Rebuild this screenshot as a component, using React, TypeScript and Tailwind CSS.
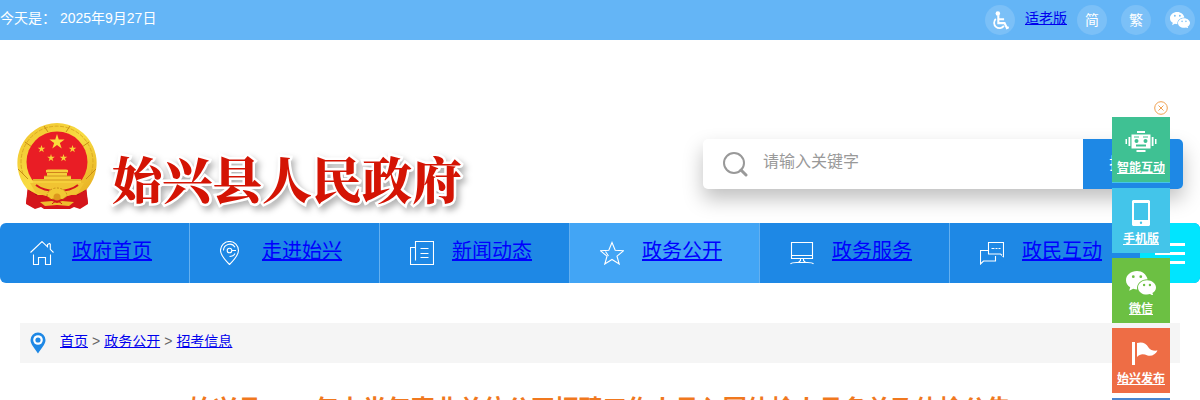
import type { ReactNode } from "react";

const sans = "font-['Liberation_Sans','Noto_Sans_CJK_SC',sans-serif]";

function Wechat({ className }: { className: string }) {
  return (
    <svg viewBox="0 0 30 24" className={className} fill="currentColor" aria-hidden="true">
      <path
        fillRule="evenodd"
        d="M11 0C4.900 0 0 4 0 9.200c0 3 1.600 5.400 4.200 7.100L3.200 19.800l4-2c1.200.3 2.500.6 3.900.6-.9-5.500 4-10.100 10.500-10.200C20.500 3.400 16.200 0 11 0ZM7.300 4.300a1.400 1.400 0 1 1 0 2.800 1.400 1.400 0 0 1 0-2.800Zm7.500 0a1.400 1.400 0 1 1 0 2.800 1.400 1.400 0 0 1 0-2.800Z"
      />
      <path
        fillRule="evenodd"
        d="M21 9.200c-5 0-9 3.300-9 7.200 0 4 4 7.200 9 7.200 1.100 0 2.100-.2 3-.5l3.300 1.600-.9-2.800c2.200-1.300 3.600-3.200 3.600-5.500 0-3.900-4-7.200-9-7.200Zm-2.900 3.600a1.200 1.200 0 1 1 0 2.400 1.200 1.200 0 0 1 0-2.400Zm5.800 0a1.200 1.200 0 1 1 0 2.400 1.200 1.200 0 0 1 0-2.400Z"
      />
    </svg>
  );
}

function Wheelchair() {
  return (
    <svg viewBox="0 0 18 20" className="h-[19px] w-[17px]" fill="none" stroke="currentColor" strokeWidth="2.200" aria-hidden="true">
      <circle cx="6.200" cy="2.500" r="2.400" fill="currentColor" stroke="none" />
      <path d="M6.700 4.500v8.300h6.600l2.500 5.200 1.900-.9M7 8.600h5.800" />
      <path d="M4 8.300a5.700 5.700 0 1 0 8.600 7.400" strokeWidth="1.900" />
    </svg>
  );
}

const starPath = (cx: number, cy: number, r: number, inner: number) =>
  Array.from({ length: 10 }, (_, i) => {
    const radius = i % 2 ? inner : r;
    const a = (Math.PI / 5) * i - Math.PI / 2;
    return `${i ? "L" : "M"}${(cx + radius * Math.cos(a)).toFixed(2)} ${(cy + radius * Math.sin(a)).toFixed(2)}`;
  }).join("") + "Z";

function Emblem() {
  return (
    <svg viewBox="0 0 82 88" className="h-[88px] w-[82px] shrink-0" role="img" aria-label="国徽">
      <defs>
        <linearGradient id="gold" x1="0" y1="0" x2="1" y2="1">
          <stop offset="0" stopColor="#f0c22c" />
          <stop offset=".5" stopColor="#f8dc42" />
          <stop offset="1" stopColor="#e6ab20" />
        </linearGradient>
      </defs>
      <path d="M12 62 10 82l9 5 6-2 3 2h26l4-2 6 2 8-5-2-20Z" fill="#d4151b" />
      <path d="M14 68v15M20 72v13M62 72v13M68 68v15" stroke="#99101a" strokeWidth="1.500" />
      <path d="M41 1a40 40 0 0 1 30 66L60 73H22L11 67A40 40 0 0 1 41 1Z" fill="url(#gold)" />
      <path d="M7 52a36 36 0 1 1 68 0" fill="none" stroke="#dba924" strokeWidth="1" strokeDasharray="4 1.500" />
      <path d="M2 47 12 57M80 47 70 57M9 20l7 5M73 20l-7 5M28 4l4 6M54 4l-4 6" stroke="#c98d15" />
      <circle cx="41" cy="40" r="30.500" fill="#e91d25" />
      <path d={starPath(41, 20, 8, 3)} fill="#fadb3c" />
      <path d={starPath(25.500, 27, 4, 1.500)} fill="#f8cf38" />
      <path d={starPath(56.500, 27, 4, 1.500)} fill="#f8cf38" />
      <path d={starPath(35, 36, 4, 1.500)} fill="#f8cf38" />
      <path d={starPath(47.500, 36, 4, 1.500)} fill="#f8cf38" />
      <path d="m30 48 2-.5h18l2 .5v2.500H30ZM31 51h20v3H31ZM28 54h27v4H28ZM17 57h48v5H17Z" fill="#f6cf3b" />
      <path d="M31 50.500h20M28 54h27M17 58h48" stroke="#c9851b" strokeWidth=".8" />
      <path d="M14 61h54l-6 10-10 3H30l-10-3Z" fill="#f1c332" />
      <path d="M20 63c6 5 12 6 21 6s15-1 21-6" fill="none" stroke="#d5161d" strokeWidth="2" />
      <path d="M12 68c8 6 14 8 23 8h12c9 0 15-2 23-8l2 13-8 5-6-2-4 2H28l-4-2-6 2-8-5Z" fill="#d4151b" />
      <path d="M31 74a10 8 0 0 1 20 0l-4 3H35Z" fill="#f2c833" stroke="#c98a19" strokeDasharray="2 1.500" />
      <circle cx="41" cy="75" r="3.500" fill="#dd981d" />
      <path d="m24 80 12-1 5 2 5-2 12 1-5 4-12-1-12 1Z" fill="#eebc2d" />
      <path d="M36 82c2-3 8-3 10 0" fill="none" stroke="#d4151b" />
    </svg>
  );
}

function LineIcon({ children }: { children: ReactNode }) {
  return (
    <svg viewBox="0 0 24 24" className="size-6 shrink-0" fill="none" stroke="#fff" strokeWidth="1.100" aria-hidden="true">
      {children}
    </svg>
  );
}

const navItems: { label: string; icon: ReactNode; active?: boolean }[] = [
  {
    label: "政府首页",
    icon: <path d="M.5 11.500 12 .6l5.500 5.200V3.500l2-1 .8.800v5l3.200 3.200M3.500 13.500v10h5v-7h7v7h5v-10" />,
  },
  {
    label: "走进始兴",
    icon: (
      <>
        <path d="M9.500 23.500C6 20 .5 14.500.5 9.500a9 9 0 0 1 18 0c0 5-5.500 10.500-9 14Z" />
        <circle cx="9.500" cy="9.500" r="2.300" />
        <path d="M12 9.500h4M3.500 9.500a6.200 6.200 0 0 1 11.500-3.300M15 12.500c-1 2-3 3-5.500 3" />
      </>
    ),
  },
  { label: "新闻动态", icon: <path d="M5.500 19.500V.5h18v23H.5v-17h5M10.500 7.500h8M10.500 12.500h8M10.500 16.500h8" /> },
  {
    label: "政务公开",
    icon: <path d="m12 1.500 3.200 7.800 8.200.5-6.400 5.400 2.200 7.800-7.200-4.500L4.800 23 7 15.200.6 9.800l8.200-.5ZM5.500 10.500 8.500 15" />,
    active: true,
  },
  { label: "政务服务", icon: <path d="M1.500 1.500h21v16h-21ZM1.500 14.500h21M10.500 17.500v2l-2 2M13.500 17.500v2l2 2M.5 23c1-1.500 3-1.500 6-1.500h11c3 0 5 0 6 1.500" /> },
  { label: "政民互动", icon: <path d="M8.500 1.500h15v14l-3-2.500h-12ZM11.500 7.500h3M15.500 7.500h2M18.500 7.500h2M8.500 9.500h-8v13.500l3-3h12v-5" /> },
];

const floats: { label: string; color: string; icon: ReactNode }[] = [
  {
    label: "智能互动",
    color: "border-b border-[#43c5ea] bg-[#3fc193]",
    icon: (
      <svg viewBox="0 0 32 22" className="h-[22px] w-8" fill="currentColor" aria-hidden="true">
        <path fillRule="evenodd" d="M12 0h8v2h-8ZM6.500 3.500h19v14h-19ZM11.500 8a2 2 0 1 0 0 4 2 2 0 0 0 0-4Zm9 0a2 2 0 1 0 0 4 2 2 0 0 0 0-4ZM11 13.500h10v2H11ZM9 5.500h5v1H9ZM18 5.500h5v1h-5ZM3.500 6h1.800v9H3.500ZM.5 8h1.500v5H.5ZM26.700 6h1.800v9h-1.800ZM30 8h1.500v5H30ZM11.500 19h9v2h-9Z" />
      </svg>
    ),
  },
  {
    label: "手机版",
    color: "bg-[#43c5ea]",
    icon: (
      <svg viewBox="0 0 18 26" className="h-[26px] w-[18px]" fill="currentColor" aria-hidden="true">
        <path fillRule="evenodd" d="M1 0h16l1 1v24l-1 1H1l-1-1V1ZM2 3v17h14V3Zm7 18.500a1.200 1.200 0 1 0 0 2.400 1.200 1.200 0 0 0 0-2.400Z" />
      </svg>
    ),
  },
  { label: "微信", color: "bg-[#6cc043]", icon: <Wechat className="h-6 w-[30px]" /> },
  {
    label: "始兴发布",
    color: "bg-[#ee6d45]",
    icon: (
      <svg viewBox="0 0 26 24" className="ml-2 h-6 w-[26px]" fill="currentColor" aria-hidden="true">
        <path d="M0 1h3v23H0ZM5 2c5-1.500 9 0 11.500 4.500C18.500 9.500 22 10 25.500 9.500 23.500 13.500 20 15.500 15.500 14.500 11.500 12.500 8 12.500 5 16Z" />
      </svg>
    ),
  },
  { label: "微博", color: "bg-[#4a86d0]", icon: <Wechat className="h-6 w-[30px]" /> },
];

const round = "flex size-[30px] items-center justify-center rounded-full bg-white/15 text-white";

export default function App() {
  return (
    <div className={`relative h-screen overflow-hidden bg-white text-sm ${sans}`}>
      <div className="flex h-10 justify-between bg-[#64b5f6] pr-[5px] text-white">
        <p className="pt-2 leading-5">今天是： 2025年9月27日</p>
        <div className="flex items-center">
          <a href="#accessible" aria-label="无障碍" className={round}>
            <Wheelchair />
          </a>
          <a href="#elder" className="mx-[10px] pb-1 text-[#0000ee] underline">适老版</a>
          <a href="#simplified" className={round}>简</a>
          <a href="#traditional" className={`mx-[14px] ${round}`}>繁</a>
          <a href="#wechat" aria-label="微信" className={round}>
            <Wechat className="h-4 w-5" />
          </a>
        </div>
      </div>

      <header className="flex items-start justify-between pt-[82px] pr-[17px] pb-[13px] pl-4">
        <div className="flex h-[88px] items-end gap-[14px]">
          <Emblem />
          <h1 className="pb-2 font-['Noto_Serif_CJK_SC','Noto_Sans_CJK_SC',serif] text-[50px] leading-[50px] font-black text-[#d41404] drop-shadow-[3px_4px_3px_rgb(0_0_0/0.3)] [-webkit-text-stroke:5px_white] [paint-order:stroke_fill]">
            始兴县人民政府
          </h1>
        </div>
        <form className="mt-[17px] flex h-[50px] w-[480px] overflow-hidden rounded-[5px] bg-white shadow-[0_10px_20px_rgb(0_0_0/0.25)]">
          <label htmlFor="keyword" className="flex shrink-0 items-center pl-5">
            <svg viewBox="0 0 26 26" className="size-[26px]" fill="none" stroke="#999" strokeWidth="2" aria-label="搜索">
              <circle cx="11" cy="12" r="10" />
              <path d="m18 19 5 5" strokeWidth="3" strokeLinecap="round" />
            </svg>
          </label>
          <input id="keyword" placeholder="请输入关键字" className="min-w-0 flex-1 px-[14px] pb-1 text-base outline-none placeholder:text-[#999]" />
          <button type="button" className="w-[100px] shrink-0 bg-[#1e88e5] text-base text-white">搜　索</button>
        </form>
      </header>

      <nav className="flex h-[60px] overflow-hidden rounded-md bg-[#1e88e5]">
        {navItems.map(({ label, icon, active }) => (
          <a
            key={label}
            href={`#${label}`}
            className={`flex w-[190px] shrink-0 items-center gap-[18px] border-r border-[#64b0f0] pl-[30px] text-xl text-[#0000ff] underline last-of-type:border-r-0 ${active ? "bg-[#42a5f5]" : ""}`}
          >
            <LineIcon>{icon}</LineIcon>
            <span className="pb-1">{label}</span>
          </a>
        ))}
        <button type="button" aria-label="更多栏目" className="flex flex-1 flex-col items-end justify-center gap-[6px] bg-[#00e5ff] pr-[15px]">
          <span className="h-[3px] w-[30px] bg-white" />
          <span className="h-[3px] w-[30px] bg-white" />
          <span className="h-[3px] w-[30px] bg-white" />
        </button>
      </nav>

      <main className="px-5 pt-10">
        <div className="flex h-10 items-center bg-[#f5f5f5] pl-[10px] text-[#666]">
          <svg viewBox="0 0 16 22" className="mr-[14px] h-[22px] w-4" aria-hidden="true">
            <path d="M8 21.500C5 16.500.5 12.500.5 8a7.500 7.500 0 0 1 15 0c0 4.500-4.500 8.500-7.500 13.500Z" fill="#1e88e5" />
            <circle cx="8" cy="8" r="4.800" fill="#fff" />
            <circle cx="8" cy="8" r="2.600" fill="#1e88e5" />
          </svg>
          <div className="flex gap-1 pb-1">
            <a href="#home" className="text-[#0000ee] underline">首页</a>
            <span>&gt;</span>
            <a href="#open" className="text-[#0000ee] underline">政务公开</a>
            <span>&gt;</span>
            <a href="#exam" className="text-[#0000ee] underline">招考信息</a>
          </div>
        </div>
        <h2 className="mt-7 text-center text-2xl leading-9 font-bold text-[#f0781e]">
          始兴县2025年上半年事业单位公开招聘工作人员入围体检人员名单及体检公告
        </h2>
      </main>

      <aside className="absolute top-[101px] right-[30px] w-[58px]">
        <button type="button" aria-label="关闭" className="ml-auto mr-[2px] block size-[14px] text-[#f0a050]">
          <svg viewBox="0 0 14 14" fill="none" stroke="currentColor" aria-hidden="true">
            <circle cx="7" cy="7" r="6.300" />
            <path d="m4.500 4.500 5 5m0-5-5 5" />
          </svg>
        </button>
        <ul className="mt-[2px] flex flex-col gap-[5px]">
          {floats.map(({ label, color, icon }) => (
            <li key={label}>
              <a href={`#${label}`} className={`box-content flex h-[65px] flex-col items-center text-xs leading-[18px] font-bold text-white underline ${color}`}>
                <span className="flex h-[42px] items-center pt-2">{icon}</span>
                {label}
              </a>
            </li>
          ))}
        </ul>
      </aside>
    </div>
  );
}
